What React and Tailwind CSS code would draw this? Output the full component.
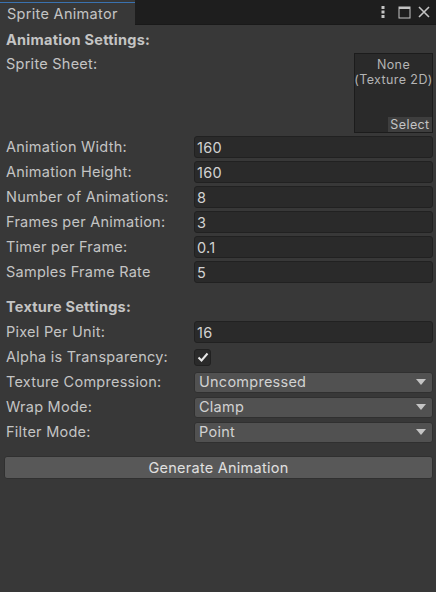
import React from "react";

const font = { fontFamily: "Inter, 'Noto Sans', sans-serif" };

function Label({ children }) {
  return (
    <div className="w-[188px] shrink-0 text-[14.5px] text-[#c4c4c4] leading-[22px] tracking-[0.25px] whitespace-nowrap">
      {children}
    </div>
  );
}

function FieldRow({ label, value }) {
  return (
    <div className="flex items-center h-[22px] mt-[3px] pl-[6px] pr-[3px]">
      <Label>{label}</Label>
      <div className="flex-1 h-[22px] bg-[#2a2a2a] border border-[#212121] rounded-[3px] px-[2px] text-[14.5px] text-[#d2d2d2] leading-[21px] tracking-[0.25px]">
        {value}
      </div>
    </div>
  );
}

function DropRow({ label, value }) {
  return (
    <div className="flex items-center h-[22px] mt-[3px] pl-[6px] pr-[3px]">
      <Label>{label}</Label>
      <div className="flex-1 h-[21px] bg-[#515151] border border-[#303030] rounded-[3px] pl-[4px] pr-[6px] flex items-center justify-between text-[14.5px] text-[#d2d2d2] tracking-[0.25px]">
        <span>{value}</span>
        <svg width="10" height="6" viewBox="0 0 10 6">
          <path d="M0 0 L10 0 L5 6 Z" fill="#c4c4c4" />
        </svg>
      </div>
    </div>
  );
}

export default function App() {
  return (
    <div className="w-[436px] h-[592px] bg-[#383838] flex flex-col" style={font}>
      {/* tab bar */}
      <div className="h-[25px] flex bg-[#1e1e1e] shrink-0">
        <div className="w-[135px] h-[25px] bg-[#383838] flex flex-col">
          <div className="h-[2px] mt-[2px] bg-[#3a72b0]" />
          <div className="flex-1 flex items-center pl-[7px] text-[14.5px] text-[#c4c4c4] tracking-[0.3px]">
            Sprite Animator
          </div>
        </div>
        <div className="flex-1 flex items-center justify-end border-b border-[#191919] pr-[6px]">
          <svg width="10" height="14" viewBox="0 0 10 14" className="mr-[10px]">
            <rect x="3.5" y="1" width="3" height="3" fill="#c4c4c4" />
            <rect x="3.5" y="5.5" width="3" height="3" fill="#c4c4c4" />
            <rect x="3.5" y="10" width="3" height="3" fill="#c4c4c4" />
          </svg>
          <svg width="13" height="13" viewBox="0 0 13 13" className="mr-[7px]">
            <rect x="1" y="1" width="11" height="11" fill="none" stroke="#c4c4c4" strokeWidth="1" />
            <rect x="1" y="1" width="11" height="2" fill="#c4c4c4" />
          </svg>
          <svg width="12" height="12" viewBox="0 0 12 12">
            <path d="M1 1 L11 11 M11 1 L1 11" stroke="#c4c4c4" strokeWidth="1.6" />
          </svg>
        </div>
      </div>

      {/* content */}
      <div className="flex flex-col">
        <div className="h-[22px] mt-[4px] pl-[6px] text-[14.5px] font-bold text-[#c4c4c4] leading-[22px] tracking-[0.25px]">
          Animation Settings:
        </div>
        <div className="flex mt-[2px] pl-[6px] pr-[3px] h-[80px]">
          <div className="flex-1 text-[14.5px] text-[#c4c4c4] leading-[22px] tracking-[0.25px]">Sprite Sheet:</div>
          <div className="w-[79px] h-[80px] bg-[#2a2a2a] border border-[#1c1c1c] flex flex-col items-center relative">
            <div className="text-[12.5px] text-[#b4b4b4] leading-[15px] mt-[3px] tracking-[0.4px]">None</div>
            <div className="text-[12.5px] text-[#b4b4b4] leading-[15px] tracking-[0.4px] whitespace-nowrap">(Texture 2D)</div>
            <div className="absolute right-0 bottom-0 w-[44px] h-[15px] bg-[#3e3e3e] text-[12.5px] text-[#c4c4c4] leading-[15px] text-center tracking-[0.4px]">
              Select
            </div>
          </div>
        </div>
        <FieldRow label="Animation Width:" value="160" />
        <FieldRow label="Animation Height:" value="160" />
        <FieldRow label="Number of Animations:" value="8" />
        <FieldRow label="Frames per Animation:" value="3" />
        <FieldRow label="Timer per Frame:" value="0.1" />
        <FieldRow label="Samples Frame Rate" value="5" />

        <div className="h-[22px] mt-[13px] pl-[6px] text-[14.5px] font-bold text-[#c4c4c4] leading-[22px] tracking-[0.25px]">
          Texture Settings:
        </div>
        <FieldRow label="Pixel Per Unit:" value="16" />
        <div className="flex items-center h-[22px] mt-[3px] pl-[6px] pr-[3px]">
          <Label>Alpha is Transparency:</Label>
          <div className="w-[17px] h-[17px] bg-[#2a2a2a] border border-[#212121] rounded-[3px] flex items-center justify-center">
            <svg width="12" height="10" viewBox="0 0 12 10">
              <path d="M1.5 5.5 L4.5 8.5 L10.5 1.5" fill="none" stroke="#e8e8e8" strokeWidth="2" />
            </svg>
          </div>
        </div>
        <DropRow label="Texture Compression:" value="Uncompressed" />
        <DropRow label="Wrap Mode:" value="Clamp" />
        <DropRow label="Filter Mode:" value="Point" />

        <div className="mt-[13px] ml-[4px] mr-[3px] h-[23px] bg-[#585858] border border-[#303030] rounded-[3px] flex items-center justify-center text-[14.5px] text-[#e0e0e0] tracking-[0.25px]">
          Generate Animation
        </div>
      </div>
    </div>
  );
}
